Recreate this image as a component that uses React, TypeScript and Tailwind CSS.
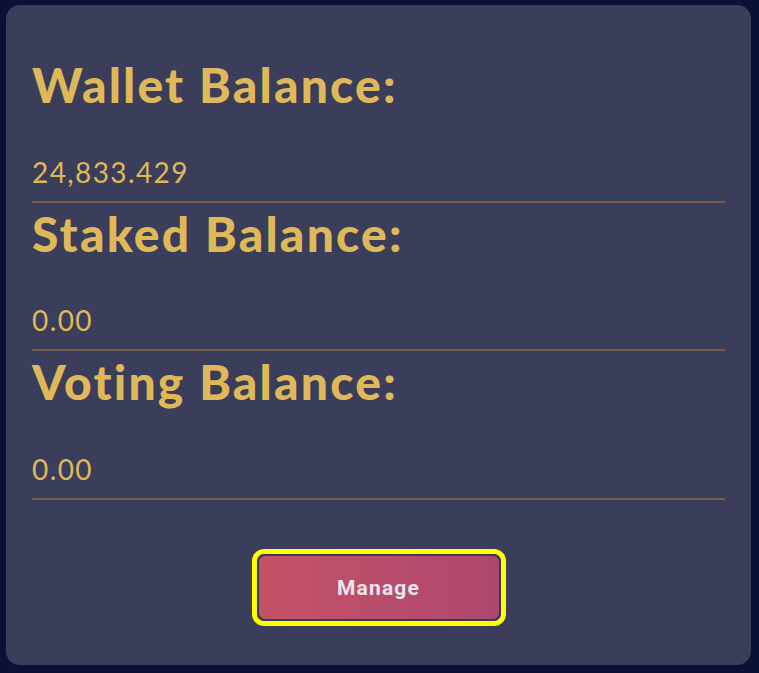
import React from "react";

const sections = [
  { label: "Wallet Balance:", value: "24,833.429" },
  { label: "Staked Balance:", value: "0.00" },
  { label: "Voting Balance:", value: "0.00" },
];

export default function App() {
  return (
    <div className="min-h-[673px] w-[759px] bg-[#0b1135] pt-[5px] pl-[6px] pr-[8px] pb-[8px]">
      <div
        className="flex h-[660px] flex-col rounded-[14px] bg-[#3a3e5a] px-[26px] pt-[51px]"
        style={{ fontFamily: "Lato, 'Open Sans', sans-serif" }}
      >
        {sections.map((s) => (
          <div key={s.label} className="flex flex-col border-b-[2px] border-[#7b5a50] pb-[11.5px] mb-[2px]">
            <div className="text-[48px] font-black leading-[1.2] tracking-[2.2px] text-[#dfb85a]">{s.label}</div>
            <div className="mt-[42px] text-[28px] leading-[1.2] tracking-[1.4px] text-[#dfb85a]">{s.value}</div>
          </div>
        ))}
        <div className="mt-[47px] flex justify-center">
          <div className="rounded-[12px] border-[5px] border-[#ffff00] p-0">
            <button
              className="flex h-[67px] w-[244px] items-center justify-center rounded-[8px] border-[2px] border-[#363a55] bg-gradient-to-r from-[#c45266] to-[#ae476f] pt-[2px] text-[21px] font-bold tracking-[1.2px] text-[#e8e6ee]"
              style={{ fontFamily: "Roboto, sans-serif" }}
            >
              Manage
            </button>
          </div>
        </div>
      </div>
    </div>
  );
}
